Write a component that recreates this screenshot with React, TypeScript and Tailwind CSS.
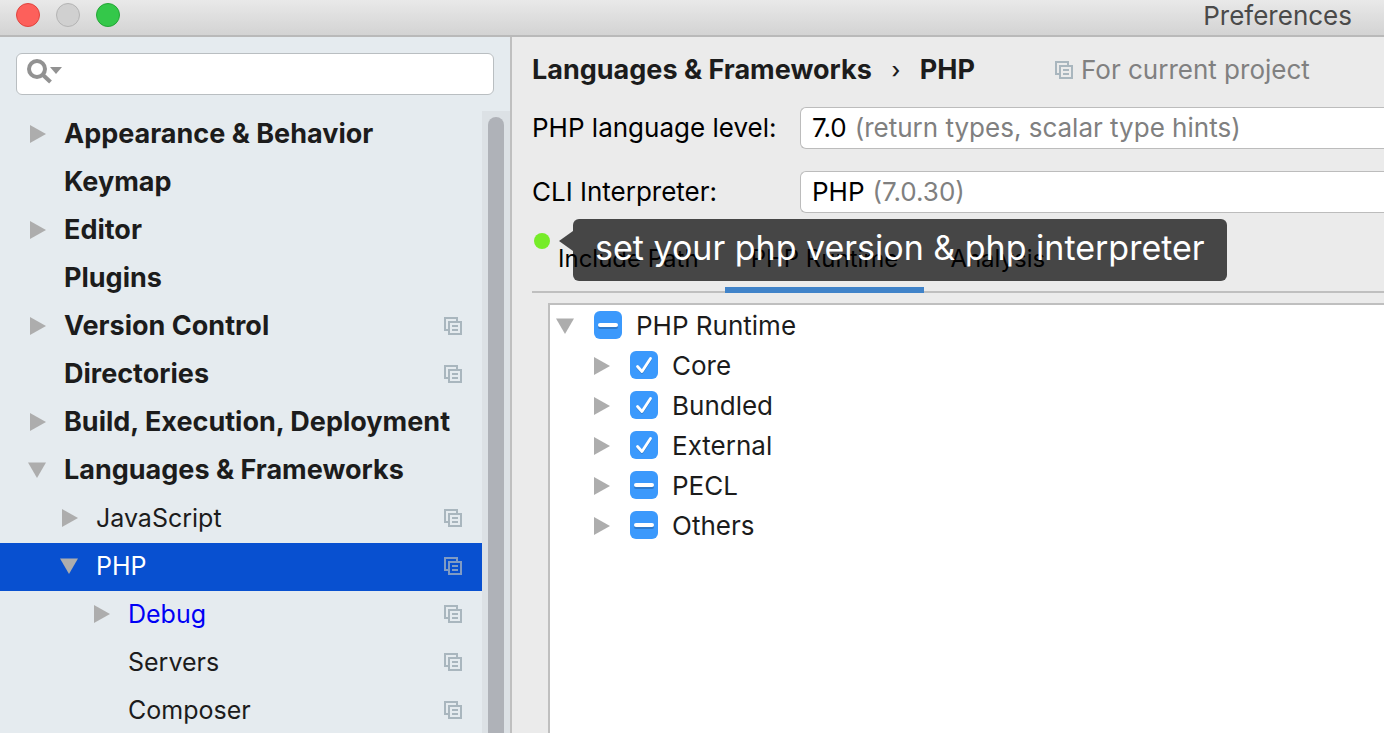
import { useEffect, useRef, useState } from "react";

function ProjectIcon({ className }: { className: string }) {
  return (
    <svg width="18" height="18" viewBox="0 0 18 18" className={className} fill="none" stroke="currentColor" strokeWidth="2" aria-hidden="true">
      <path d="M4 13H1V1H13V4" />
      <path d="M5 5H17V17H5Z" />
      <path d="M8 9H14M8 13H14" />
    </svg>
  );
}

function Triangle({ open }: { open: boolean }) {
  return (
    <svg width="18" height="18" viewBox="0 0 18 18" className="block fill-[#adadad]" aria-hidden="true">
      {open ? <path d="M0 1.5H18L9 17Z" /> : <path d="M2 0V18L18 9Z" />}
    </svg>
  );
}

type Item = {
  label: string;
  level: 0 | 1 | 2;
  arrow?: "open" | "closed";
  project?: boolean;
  selected?: boolean;
  changed?: boolean;
};

const items: Item[] = [
  { label: "Appearance & Behavior", level: 0, arrow: "closed" },
  { label: "Keymap", level: 0 },
  { label: "Editor", level: 0, arrow: "closed" },
  { label: "Plugins", level: 0 },
  { label: "Version Control", level: 0, arrow: "closed", project: true },
  { label: "Directories", level: 0, project: true },
  { label: "Build, Execution, Deployment", level: 0, arrow: "closed" },
  { label: "Languages & Frameworks", level: 0, arrow: "open" },
  { label: "JavaScript", level: 1, arrow: "closed", project: true },
  { label: "PHP", level: 1, arrow: "open", project: true, selected: true },
  { label: "Debug", level: 2, arrow: "closed", project: true, changed: true },
  { label: "Servers", level: 2, project: true },
  { label: "Composer", level: 2, project: true },
];

const indents = ["pl-7", "pl-[60px]", "pl-[92px]"];

function SidebarRow({ item }: { item: Item }) {
  const color = item.selected ? "text-white" : item.changed ? "text-[#0000f5]" : "text-[#1c1c1c]";
  return (
    <li>
      <button
        type="button"
        className={`flex h-12 w-full items-center pr-5 pb-0.5 text-left ${indents[item.level]} ${item.selected ? "bg-[#0850d0]" : ""}`}
      >
        <span className="w-9 shrink-0">{item.arrow && <Triangle open={item.arrow === "open"} />}</span>
        <span className={`flex-1 whitespace-nowrap ${item.level === 0 ? "text-[27px] leading-8 font-bold" : ""} ${color}`}>{item.label}</span>
        {item.project && <ProjectIcon className={item.selected ? "text-[#7f9bc4]" : "text-[#a9b6be]"} />}
      </button>
    </li>
  );
}

function CheckBox({ id, mixed }: { id: string; mixed: boolean }) {
  const ref = useRef<HTMLInputElement>(null);
  useEffect(() => {
    if (ref.current) ref.current.indeterminate = mixed;
  }, [mixed]);
  return (
    <span className="relative block size-7 shrink-0">
      <input ref={ref} id={id} type="checkbox" defaultChecked={!mixed} className="block size-7 appearance-none rounded-md bg-[#3b99fc]" />
      <svg viewBox="0 0 28 28" className="pointer-events-none absolute inset-0 size-7" fill="none" strokeLinecap="round" strokeLinejoin="round" aria-hidden="true">
        {mixed ? (
          <>
            <path d="M6 16H22" stroke="#2f7aca" strokeWidth="4" />
            <path d="M6 14H22" stroke="#fff" strokeWidth="4" />
          </>
        ) : (
          <>
            <path d="M7.5 16.5L12 21.5L20.5 8.5" stroke="#2f7aca" strokeWidth="2.6" />
            <path d="M7.5 15.5L12 20.5L20.5 7.5" stroke="#fff" strokeWidth="2.8" />
          </>
        )}
      </svg>
    </span>
  );
}

const modules = [
  { label: "Core", mixed: false },
  { label: "Bundled", mixed: false },
  { label: "External", mixed: false },
  { label: "PECL", mixed: true },
  { label: "Others", mixed: true },
];

function RuntimeRow({ label, mixed, open }: { label: string; mixed: boolean; open: boolean }) {
  return (
    <div className={`flex h-10 items-center gap-5 ${open ? "pl-1.5" : "pl-[42px]"}`}>
      <span className="pt-0.5">
        <Triangle open={open} />
      </span>
      <div className="flex items-center gap-3.5">
        <CheckBox id={label} mixed={mixed} />
        <label htmlFor={label} className="pt-0.5">
          {label}
        </label>
      </div>
    </div>
  );
}

function Field({ id, label, value, note }: { id: string; label: string; value: string; note: string }) {
  return (
    <div className="flex items-center">
      <label htmlFor={id} className="w-[268px] shrink-0 whitespace-nowrap text-black">
        {label}
      </label>
      <div className="relative h-[42px] flex-1 rounded-l-md border border-r-0 border-[#bcbcbc] bg-white">
        <div className="flex h-full items-center gap-2 pl-[11px] whitespace-nowrap">
          <span className="text-black">{value}</span>
          <span className="text-[#808080]">{note}</span>
        </div>
        <select id={id} className="absolute inset-0 size-full opacity-0">
          <option>{`${value} ${note}`}</option>
        </select>
      </div>
    </div>
  );
}

const tabs = ["Include Path", "PHP Runtime", "Analysis"];

export default function App() {
  const [active, setActive] = useState("PHP Runtime");
  return (
    <div className="flex h-screen flex-col overflow-hidden bg-[#ebebeb] font-['Inter',sans-serif] text-[26px] leading-8">
      <header className="flex h-[37px] shrink-0 items-center border-b-2 border-[#b9b9b9] bg-linear-to-b from-[#e9e9e9] to-[#d3d3d3] pr-8 pb-1.5 pl-4">
        <div className="flex gap-4">
          <button type="button" aria-label="Close" className="size-6 rounded-full border border-[#e0443e] bg-[#fd605b]" />
          <button type="button" aria-label="Minimize" className="size-6 rounded-full border border-[#b4b4b4] bg-[#d0d0d0]" />
          <button type="button" aria-label="Zoom" className="size-6 rounded-full border border-[#24a636] bg-[#34c84a]" />
        </div>
        <h1 className="ml-auto pt-0.5 text-[#4a4a4a]">Preferences</h1>
      </header>

      <div className="flex min-h-0 flex-1">
        <aside className="flex w-[512px] shrink-0 flex-col border-r-2 border-[#bfbfbf] bg-[#e5ebef] text-[25px] leading-8">
          <div className="px-4 pt-4 pb-4">
            <div className="flex h-[42px] items-center rounded-md border border-[#b9bec1] bg-white pl-[9px]">
              <svg width="36" height="26" viewBox="0 0 36 26" className="mb-1.5 shrink-0" fill="none" aria-hidden="true">
                <circle cx="11" cy="11" r="8" stroke="#929292" strokeWidth="4" />
                <path d="M17 17L24.5 24" stroke="#929292" strokeWidth="4" />
                <path d="M24 9H36L30 16Z" fill="#929292" />
              </svg>
              <input type="search" aria-label="Search preferences" className="min-w-0 flex-1 bg-transparent px-2 outline-none" />
            </div>
          </div>
          <div className="flex min-h-0 flex-1">
            <ul className="min-w-0 flex-1 overflow-hidden">
              {items.map((item) => (
                <SidebarRow key={item.label} item={item} />
              ))}
            </ul>
            <div className="w-7 bg-[#dce1e5] px-1.5 pt-1.5">
              <div className="h-full rounded-t-full bg-[#afb2b8]" />
            </div>
          </div>
        </aside>

        <main className="flex min-w-0 flex-1 flex-col pl-5">
          <div className="flex h-[70px] shrink-0 items-center pb-1 whitespace-nowrap">
            <h2 className="flex items-center text-[27px] leading-8 font-bold text-[#1c1c1c]">
              <span>Languages &amp; Frameworks</span>
              <span className="w-12 text-center text-[22px] font-medium">›</span>
              <span>PHP</span>
            </h2>
            <span className="ml-20 flex items-center gap-2 text-[#808080]">
              <ProjectIcon className="text-[#a9b6be]" />
              For current project
            </span>
          </div>

          <div className="flex flex-col gap-[22px]">
            <Field id="level" label="PHP language level:" value="7.0" note="(return types, scalar type hints)" />
            <Field id="cli" label="CLI Interpreter:" value="PHP" note="(7.0.30)" />
          </div>

          <div className="relative mt-3 flex h-[68px] shrink-0 border-b-2 border-[#bfbfbf]">
            {tabs.map((tab) => (
              <button
                key={tab}
                type="button"
                onClick={() => setActive(tab)}
                className={`-mb-0.5 border-b-[6px] px-[26px] pt-1.5 text-[24px] leading-8 whitespace-nowrap text-black ${active === tab ? "border-[#4083c9]" : "border-transparent"}`}
              >
                {tab}
              </button>
            ))}
            <div className="absolute -top-1.5 left-0.5 flex items-start">
              <span className="mt-3.5 size-4 rounded-full bg-[#76ec28]" />
              <svg width="14" height="20" viewBox="0 0 14 20" className="mt-3 ml-[9px] fill-black/70" aria-hidden="true">
                <path d="M14 0V20L0 10Z" />
              </svg>
              <div role="tooltip" className="flex h-[62px] items-center rounded-md bg-black/70 px-[22px] pb-1 text-[34px] whitespace-nowrap text-white">
                set your php version &amp; php interpreter
              </div>
            </div>
          </div>

          <div className="mt-2.5 ml-4 min-h-0 flex-1 overflow-hidden border-t-2 border-l-2 border-[#bfbfbf] bg-white text-[#1c1c1c]">
            <RuntimeRow label="PHP Runtime" mixed open />
            <ul>
              {modules.map((m) => (
                <li key={m.label}>
                  <RuntimeRow label={m.label} mixed={m.mixed} open={false} />
                </li>
              ))}
            </ul>
          </div>
        </main>
      </div>
    </div>
  );
}
